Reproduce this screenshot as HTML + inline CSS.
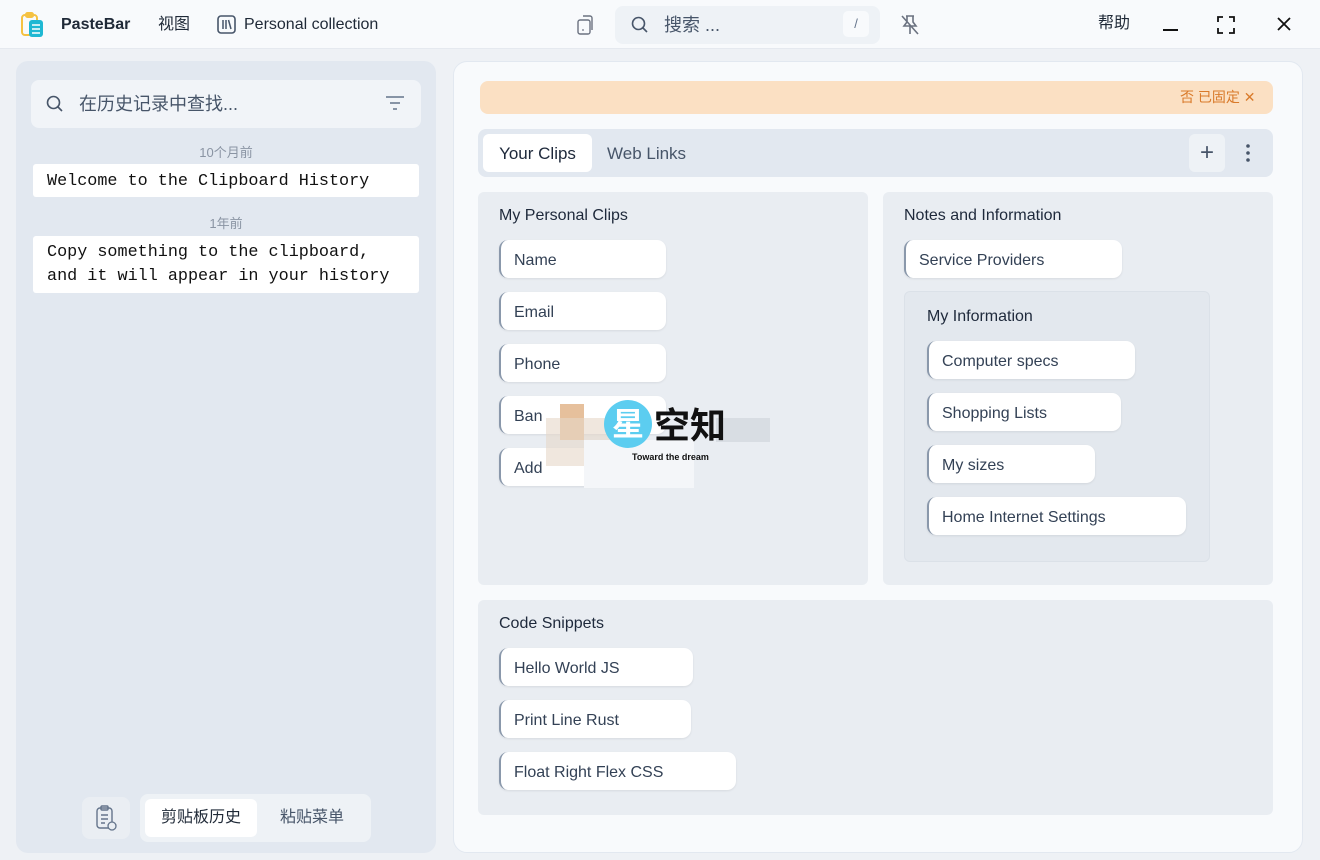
<!DOCTYPE html>
<html><head><meta charset="utf-8"><style>
*{box-sizing:border-box;margin:0;padding:0}
body{width:1320px;height:860px;overflow:hidden;background:#eef1f5;font-family:"Liberation Sans","Noto Sans CJK SC",sans-serif;color:#1e293b;position:relative;line-height:20px}
.a{position:absolute}
.top{left:0;top:0;width:1320px;height:49px;background:#f8fafc;border-bottom:1px solid #e5e9ef}
.t{font-size:16px;color:#1f2937;line-height:20px}
.left{left:16px;top:61px;width:420px;height:792px;background:#e2e8f0;border-radius:12px}
.right{left:453px;top:61px;width:850px;height:792px;background:#f8fafc;border-radius:14px;border:1px solid #e2e8f0}
.card{background:#e9edf2;border-radius:6px}
.clip{position:absolute;height:38px;background:#fff;border-radius:9px;border-left:2px solid #8a98ab;box-shadow:0 1px 2px rgba(0,0,0,.08);font-size:16px;color:#334155;padding:2px 0 0 13px;line-height:38px;white-space:nowrap}
.h{font-size:16px;color:#1e293b;font-weight:500;line-height:20px}
.mono{font-family:"Liberation Mono",monospace;font-size:16.8px;color:#111}
</style></head><body>
<div class="a top"></div>
<svg class="a" style="left:20px;top:11px" width="26" height="28" viewBox="0 0 26 28"><rect x="2" y="4" width="15" height="20" rx="3" fill="none" stroke="#f5c242" stroke-width="2"/><rect x="6" y="2" width="7" height="4" rx="1.5" fill="none" stroke="#f5c242" stroke-width="2"/><rect x="9" y="9" width="14" height="17" rx="3" fill="#1fb8d3"/><path d="M12 14h8M12 18h8M12 22h8" stroke="#fff" stroke-width="1.6"/></svg>
<div class="a t" style="left:61px;top:15px;font-weight:600">PasteBar</div>
<div class="a t" style="left:158px;top:15px">视图</div>
<svg class="a" style="left:217px;top:15px" width="19" height="19" viewBox="0 0 19 19"><rect x="1" y="1" width="17" height="17" rx="3" fill="none" stroke="#475569" stroke-width="1.6"/><path d="M6 5v9M9 5v9M11.5 5l2.5 9" stroke="#475569" stroke-width="1.5"/></svg>
<div class="a t" style="left:244px;top:15px">Personal collection</div>
<svg class="a" style="left:575px;top:14px" width="20" height="22" viewBox="0 0 20 22"><rect x="3" y="6" width="12" height="14" rx="2" fill="none" stroke="#6b7280" stroke-width="1.4"/><path d="M8 2h7a2 2 0 0 1 2 2v12" fill="none" stroke="#6b7280" stroke-width="1.4"/><circle cx="8" cy="16" r="0.9" fill="#6b7280"/></svg>
<div class="a" style="left:615px;top:6px;width:265px;height:38px;background:#eef2f6;border-radius:8px"></div>
<svg class="a" style="left:630px;top:15px" width="20" height="20" viewBox="0 0 20 20"><circle cx="8.5" cy="8.5" r="6" fill="none" stroke="#475569" stroke-width="1.6"/><path d="M13 13l4 4" stroke="#475569" stroke-width="1.6"/></svg>
<div class="a" style="left:664px;top:14px;font-size:18px;line-height:22px;color:#475569">搜索 ...</div>
<div class="a" style="left:843px;top:11px;width:26px;height:26px;background:#f8fafc;border-radius:5px;font-size:13px;color:#64748b;text-align:center;line-height:26px">/</div>
<svg class="a" style="left:898px;top:13px" width="24" height="24" viewBox="0 0 24 24"><path d="M8 3h8M9 3v6l-3 4h12l-3-4V3M12 13v8M4 3l16 18" fill="none" stroke="#6b7280" stroke-width="1.6"/></svg>
<div class="a t" style="left:1098px;top:14px">帮助</div>
<div class="a" style="left:1163px;top:29px;width:15px;height:2px;background:#111"></div>
<svg class="a" style="left:1217px;top:16px" width="18" height="18" viewBox="0 0 18 18"><path d="M1 6V1h5M12 1h5v5M17 12v5h-5M6 17H1v-5" fill="none" stroke="#111" stroke-width="1.8"/></svg>
<svg class="a" style="left:1277px;top:17px" width="14" height="14" viewBox="0 0 14 14"><path d="M1 1l12 12M13 1L1 13" stroke="#111" stroke-width="1.8"/></svg>

<div class="a left"></div>
<div class="a" style="left:31px;top:80px;width:390px;height:48px;background:#f1f4f8;border-radius:8px"></div>
<svg class="a" style="left:45px;top:94px" width="20" height="20" viewBox="0 0 20 20"><circle cx="8.5" cy="8.5" r="6" fill="none" stroke="#475569" stroke-width="1.6"/><path d="M13 13l4 4" stroke="#475569" stroke-width="1.6"/></svg>
<div class="a" style="left:79px;top:93px;font-size:18px;line-height:22px;color:#475569">在历史记录中查找...</div>
<svg class="a" style="left:385px;top:95px" width="20" height="16" viewBox="0 0 20 16"><path d="M1 2h18M5 8h10M8 14h4" stroke="#64748b" stroke-width="1.6"/></svg>
<div class="a" style="left:0;width:452px;top:143px;text-align:center;font-size:13px;color:#8a94a3">10个月前</div>
<div class="a mono" style="left:33px;top:164px;width:386px;height:33px;background:#fff;border-radius:3px;padding:1px 0 0 14px;line-height:33px">Welcome to the Clipboard History</div>
<div class="a" style="left:0;width:452px;top:214px;text-align:center;font-size:13px;color:#8a94a3">1年前</div>
<div class="a mono" style="left:33px;top:236px;width:386px;height:57px;background:#fff;border-radius:3px;padding:5px 0 0 14px;line-height:24px">Copy something to the clipboard,<br>and it will appear in your history</div>
<div class="a" style="left:82px;top:797px;width:48px;height:42px;background:#eaeef3;border-radius:8px"></div>
<svg class="a" style="left:94px;top:804px" width="24" height="28" viewBox="0 0 24 28"><rect x="3" y="4" width="15" height="20" rx="3" fill="none" stroke="#64748b" stroke-width="1.4"/><rect x="7" y="2" width="7" height="4" rx="1" fill="none" stroke="#64748b" stroke-width="1.4"/><path d="M7 11h7M7 15h7M7 19h4" stroke="#64748b" stroke-width="1.4"/><circle cx="18" cy="22" r="4" fill="#eaeef3" stroke="#64748b" stroke-width="1.3"/></svg>
<div class="a" style="left:140px;top:794px;width:231px;height:48px;background:#eef2f6;border-radius:8px"></div>
<div class="a" style="left:145px;top:799px;width:112px;height:38px;background:#fff;border-radius:6px;font-size:16px;text-align:center;line-height:38px;color:#1f2937">剪贴板历史</div>
<div class="a" style="left:262px;top:799px;width:100px;height:38px;font-size:16px;text-align:center;line-height:38px;color:#475569">粘贴菜单</div>

<div class="a right"></div>
<div class="a" style="left:480px;top:81px;width:793px;height:33px;background:#fbe0c3;border-radius:8px"></div>
<div class="a" style="left:1180px;top:87px;font-size:14px;color:#d97a2a">否 已固定 ✕</div>
<div class="a" style="left:478px;top:129px;width:795px;height:48px;background:#e2e8f0;border-radius:8px"></div>
<div class="a" style="left:483px;top:134px;width:109px;height:38px;background:#fff;border-radius:6px;font-size:17px;text-align:center;line-height:38px;padding-top:1px;color:#1e293b">Your Clips</div>
<div class="a" style="left:607px;top:135px;font-size:17px;line-height:38px;color:#475569">Web Links</div>
<div class="a" style="left:1189px;top:134px;width:36px;height:38px;background:#eef2f6;border-radius:6px;font-size:24px;text-align:center;line-height:38px;color:#475569">+</div>
<svg class="a" style="left:1244px;top:143px" width="8" height="20" viewBox="0 0 8 20"><circle cx="4" cy="3" r="1.8" fill="#475569"/><circle cx="4" cy="10" r="1.8" fill="#475569"/><circle cx="4" cy="17" r="1.8" fill="#475569"/></svg>

<div class="a card" style="left:478px;top:192px;width:390px;height:393px"></div>
<div class="a h" style="left:499px;top:206px">My Personal Clips</div>
<div class="clip" style="left:499px;top:240px;width:167px">Name</div>
<div class="clip" style="left:499px;top:292px;width:167px">Email</div>
<div class="clip" style="left:499px;top:344px;width:167px">Phone</div>
<div class="clip" style="left:499px;top:396px;width:167px">Ban</div>
<div class="clip" style="left:499px;top:448px;width:167px">Add</div>

<div class="a card" style="left:883px;top:192px;width:390px;height:393px"></div>
<div class="a h" style="left:904px;top:206px">Notes and Information</div>
<div class="clip" style="left:904px;top:240px;width:218px">Service Providers</div>
<div class="a" style="left:904px;top:291px;width:306px;height:271px;background:#e3e8ee;border-radius:6px;border:1px solid #dbe1e8"></div>
<div class="a h" style="left:927px;top:307px">My Information</div>
<div class="clip" style="left:927px;top:341px;width:208px">Computer specs</div>
<div class="clip" style="left:927px;top:393px;width:194px">Shopping Lists</div>
<div class="clip" style="left:927px;top:445px;width:168px">My sizes</div>
<div class="clip" style="left:927px;top:497px;width:259px">Home Internet Settings</div>

<div class="a card" style="left:478px;top:600px;width:795px;height:215px"></div>
<div class="a h" style="left:499px;top:614px">Code Snippets</div>
<div class="clip" style="left:499px;top:648px;width:194px">Hello World JS</div>
<div class="clip" style="left:499px;top:700px;width:192px">Print Line Rust</div>
<div class="clip" style="left:499px;top:752px;width:237px">Float Right Flex CSS</div>

<div class="a" style="left:546px;top:404px;width:224px;height:84px">
<div class="a" style="left:14px;top:0;width:24px;height:36px;background:#e6c09c"></div>
<div class="a" style="left:0;top:14px;width:70px;height:48px;background:rgba(230,215,200,.6)"></div>
<div class="a" style="left:38px;top:36px;width:110px;height:48px;background:#f4f6f9"></div>
<div class="a" style="left:170px;top:14px;width:54px;height:24px;background:#d8dde3"></div>
<div class="a" style="left:58px;top:-4px;width:48px;height:48px;border-radius:50%;background:#5ccdf0;color:#fff;font-size:32px;font-weight:bold;text-align:center;line-height:48px">星</div>
<div class="a" style="left:108px;top:0;font-size:36px;font-weight:bold;color:#111;line-height:44px">空知</div>
<div class="a" style="left:86px;top:47px;font-size:9px;font-weight:bold;color:#111;line-height:12px">Toward the dream</div>
</div>
</body></html>
